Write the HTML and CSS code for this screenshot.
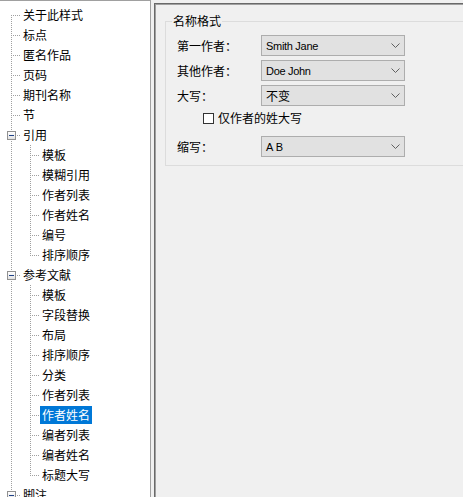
FILE: index.html
```html
<!DOCTYPE html>
<html lang="zh-CN">
<head>
<meta charset="utf-8">
<title>样式编辑器</title>
<link rel="stylesheet" href="styles.css">
</head>
<body>
<div class="window">
  <div class="tree">
    <div class="row"><span class="pad"></span><span class="c first"></span><span class="lbl">关于此样式</span></div>
    <div class="row"><span class="pad"></span><span class="c tee"></span><span class="lbl">标点</span></div>
    <div class="row"><span class="pad"></span><span class="c tee"></span><span class="lbl">匿名作品</span></div>
    <div class="row"><span class="pad"></span><span class="c tee"></span><span class="lbl">页码</span></div>
    <div class="row"><span class="pad"></span><span class="c tee"></span><span class="lbl">期刊名称</span></div>
    <div class="row"><span class="pad"></span><span class="c tee"></span><span class="lbl">节</span></div>
    <div class="row"><span class="pad"></span><span class="c tee minus"><span class="mbox"></span></span><span class="lbl">引用</span></div>
    <div class="row"><span class="pad"></span><span class="cv"></span><span class="c tee"></span><span class="lbl">模板</span></div>
    <div class="row"><span class="pad"></span><span class="cv"></span><span class="c tee"></span><span class="lbl">模糊引用</span></div>
    <div class="row"><span class="pad"></span><span class="cv"></span><span class="c tee"></span><span class="lbl">作者列表</span></div>
    <div class="row"><span class="pad"></span><span class="cv"></span><span class="c tee"></span><span class="lbl">作者姓名</span></div>
    <div class="row"><span class="pad"></span><span class="cv"></span><span class="c tee"></span><span class="lbl">编号</span></div>
    <div class="row"><span class="pad"></span><span class="cv"></span><span class="c end"></span><span class="lbl">排序顺序</span></div>
    <div class="row"><span class="pad"></span><span class="c tee minus"><span class="mbox"></span></span><span class="lbl">参考文献</span></div>
    <div class="row"><span class="pad"></span><span class="cv"></span><span class="c tee"></span><span class="lbl">模板</span></div>
    <div class="row"><span class="pad"></span><span class="cv"></span><span class="c tee"></span><span class="lbl">字段替换</span></div>
    <div class="row"><span class="pad"></span><span class="cv"></span><span class="c tee"></span><span class="lbl">布局</span></div>
    <div class="row"><span class="pad"></span><span class="cv"></span><span class="c tee"></span><span class="lbl">排序顺序</span></div>
    <div class="row"><span class="pad"></span><span class="cv"></span><span class="c tee"></span><span class="lbl">分类</span></div>
    <div class="row"><span class="pad"></span><span class="cv"></span><span class="c tee"></span><span class="lbl">作者列表</span></div>
    <div class="row"><span class="pad"></span><span class="cv"></span><span class="c tee"></span><span class="lbl sel">作者姓名</span></div>
    <div class="row"><span class="pad"></span><span class="cv"></span><span class="c tee"></span><span class="lbl">编者列表</span></div>
    <div class="row"><span class="pad"></span><span class="cv"></span><span class="c tee"></span><span class="lbl">编者姓名</span></div>
    <div class="row"><span class="pad"></span><span class="cv"></span><span class="c end"></span><span class="lbl">标题大写</span></div>
    <div class="row"><span class="pad"></span><span class="c tee minus"><span class="mbox"></span></span><span class="lbl">脚注</span></div>
  </div>
  <div class="panel">
    <fieldset class="group">
      <legend>名称格式</legend>
      <div class="form">
        <span class="lab">第一作者：</span>
        <div class="combo"><span class="val lat tight">Smith Jane</span><svg class="chev" width="9" height="5" viewBox="0 0 9 5"><path d="M0.5 0.5 L4.5 4.5 L8.5 0.5" fill="none" stroke="#606060" stroke-width="1"/></svg></div>
        <span class="lab">其他作者：</span>
        <div class="combo"><span class="val lat tight">Doe John</span><svg class="chev" width="9" height="5" viewBox="0 0 9 5"><path d="M0.5 0.5 L4.5 4.5 L8.5 0.5" fill="none" stroke="#606060" stroke-width="1"/></svg></div>
        <span class="lab">大写：</span>
        <div class="combo"><span class="val">不变</span><svg class="chev" width="9" height="5" viewBox="0 0 9 5"><path d="M0.5 0.5 L4.5 4.5 L8.5 0.5" fill="none" stroke="#606060" stroke-width="1"/></svg></div>
        <div class="check"><span class="box"></span><span>仅作者的姓大写</span></div>
        <span class="lab">缩写：</span>
        <div class="combo"><span class="val lat">A B</span><svg class="chev" width="9" height="5" viewBox="0 0 9 5"><path d="M0.5 0.5 L4.5 4.5 L8.5 0.5" fill="none" stroke="#606060" stroke-width="1"/></svg></div>
      </div>
    </fieldset>
  </div>
</div>
</body>
</html>
```
FILE: styles.css
```css
* { box-sizing: border-box; }
html, body { margin: 0; }
body {
  width: 463px;
  height: 497px;
  overflow: hidden;
  background: #f0f0f0;
  font-family: "Noto Sans CJK SC", "Noto Sans", sans-serif;
  font-size: 12px;
  color: #000;
  --v: repeating-linear-gradient(to bottom, #a0a0a0 0 1px, transparent 1px 2px);
  --h: repeating-linear-gradient(to right, #a0a0a0 0 1px, transparent 1px 2px);
}
.window { display: flex; height: 497px; }

/* tree view */
.tree {
  width: 151px;
  flex: none;
  background: #fff;
  border-top: 1px solid #a0a0a0;
  border-right: 1px solid #a0a0a0;
  padding-top: 4px;
  overflow: hidden;
}
.row { display: flex; align-items: center; height: 20px; flex: none; }
.pad { width: 11px; flex: none; }
.c { width: 10px; height: 20px; flex: none; display: flex; align-items: flex-start; }
.cv { width: 19px; height: 20px; flex: none; background: var(--v) 0 0 / 1px 100% no-repeat; }
.tee { background: var(--v) 0 0 / 1px 100% no-repeat, var(--h) 0 10px / 100% 1px no-repeat; }
.end { background: var(--v) 0 0 / 1px 10px no-repeat, var(--h) 0 10px / 100% 1px no-repeat; }
.first { background: var(--v) 0 10px / 1px 10px no-repeat, var(--h) 0 10px / 100% 1px no-repeat; }
.mbox {
  width: 9px;
  height: 9px;
  margin: 6px 0 0 -4px;
  flex: none;
  border: 1px solid #919191;
  background: linear-gradient(#ffffff, #e2e2e2);
  display: flex;
  align-items: center;
  justify-content: center;
}
.mbox::after { content: ""; width: 5px; height: 1px; background: #1f4288; }
.lbl { padding: 0 2px; height: 18px; line-height: 18px; white-space: nowrap; }
.sel { background: #0078d7; color: #fff; }

/* right panel */
.panel {
  flex: 1;
  margin: 3px 0 0 3px;
  border-top: 1px solid #696969;
  border-left: 1px solid #696969;
  box-shadow: inset 1px 1px 0 #a0a0a0;
  overflow: hidden;
}
.group {
  margin: 9px 0 0 10px;
  width: 330px;
  min-width: 0;
  padding: 6px 0 8px 6px;
  border: 1px solid #dcdcdc;
}
.group legend { padding: 0 1px; line-height: 16px; }
.form {
  display: grid;
  grid-template-columns: 84px 144px;
  row-gap: 4px;
  margin-left: 5px;
  align-items: center;
}
.lab { line-height: 16px; white-space: nowrap; }
.combo {
  height: 21px;
  background: #e1e1e1;
  border: 1px solid #adadad;
  display: flex;
  align-items: center;
  justify-content: space-between;
  padding: 0 4px 0 4px;
}
.val { line-height: 16px; white-space: nowrap; }
.lat { font-family: "Liberation Sans", Arial, sans-serif; font-size: 11px; }
.tight { letter-spacing: -0.3px; }
.chev { flex: none; display: block; }
.check {
  grid-column: 1 / -1;
  height: 22px;
  display: flex;
  align-items: flex-start;
  gap: 4px;
  padding-left: 26px;
  line-height: 16px;
}
.box { width: 11px; height: 11px; margin-top: 3px; flex: none; border: 1px solid #333; background: #fff; }
```
